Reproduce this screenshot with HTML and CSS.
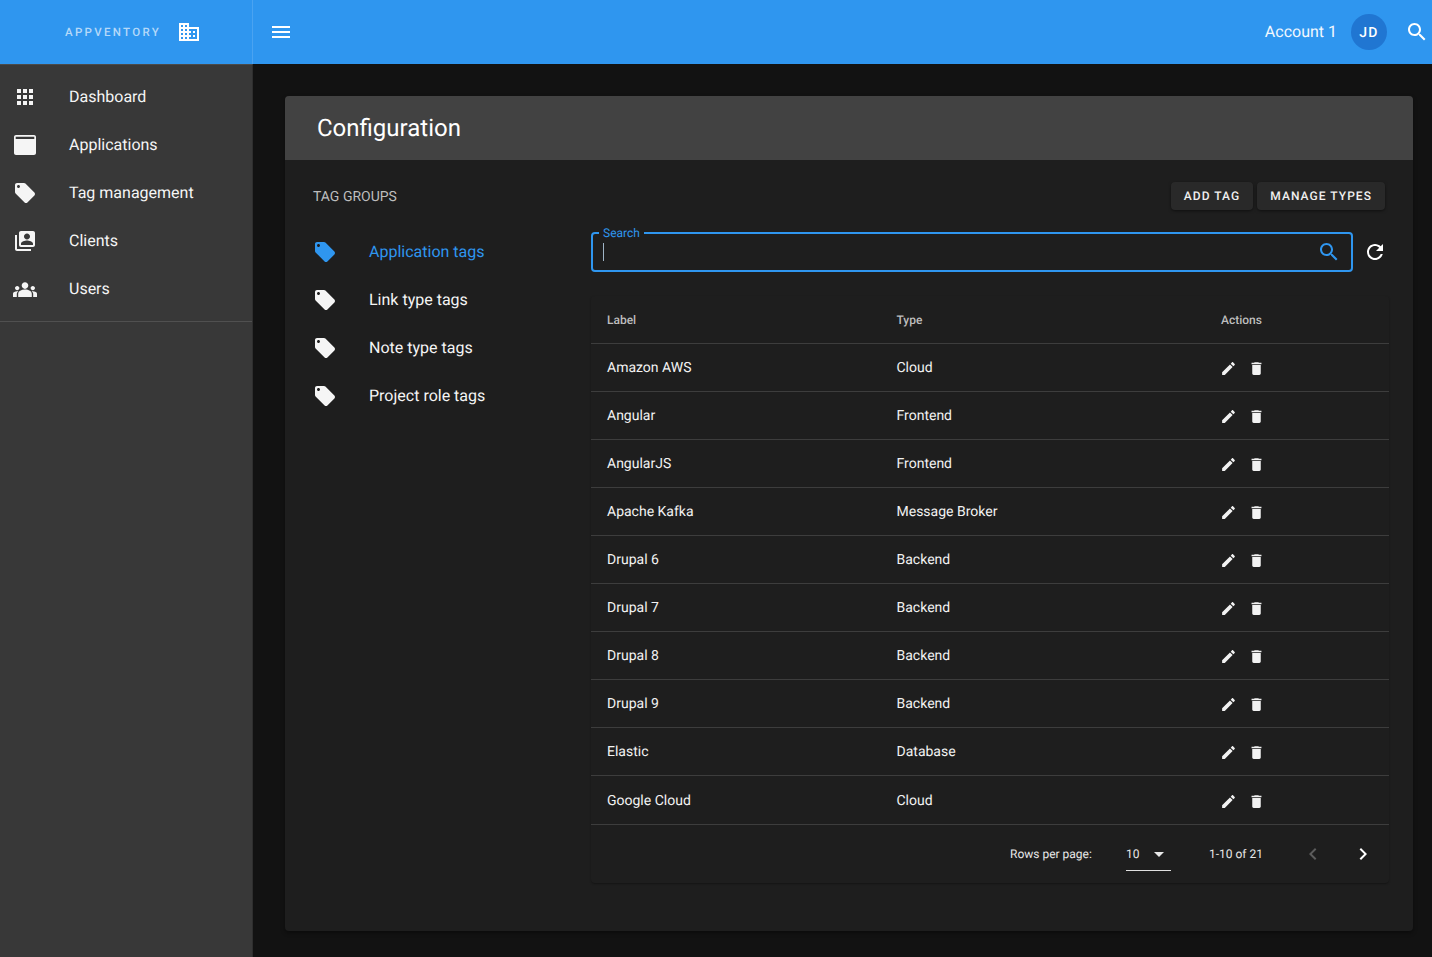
FILE: index.html
```html
<!DOCTYPE html>
<html lang="en">
<head>
<meta charset="utf-8">
<title>Appventory - Configuration</title>
<link rel="stylesheet" href="styles.css">
</head>
<body>
<svg class="defs" width="0" height="0" aria-hidden="true">
  <symbol id="i-tag" viewBox="0 0 24 24"><path d="M21.41 11.58l-9-9C12.05 2.22 11.55 2 11 2H4c-1.1 0-2 .9-2 2v7c0 .55.22 1.05.59 1.42l9 9c.36.36.86.58 1.41.58.55 0 1.05-.22 1.41-.59l7-7c.37-.36.59-.86.59-1.41 0-.55-.23-1.06-.59-1.42zM5.5 7C4.67 7 4 6.33 4 5.5S4.67 4 5.5 4 7 4.67 7 5.5 6.33 7 5.5 7z"/></symbol>
  <symbol id="i-search" viewBox="0 0 24 24"><path d="M15.5 14h-.79l-.28-.27C15.41 12.59 16 11.11 16 9.5 16 5.91 13.09 3 9.5 3S3 5.91 3 9.5 5.91 16 9.5 16c1.61 0 3.09-.59 4.23-1.57l.27.28v.79l5 4.99L20.49 19l-4.99-5zm-6 0C7.01 14 5 11.99 5 9.5S7.01 5 9.5 5 14 7.01 14 9.5 11.99 14 9.5 14z"/></symbol>
  <symbol id="i-edit" viewBox="0 0 24 24"><path d="M3 17.25V21h3.75L17.81 9.94l-3.75-3.75L3 17.25zM20.71 7.04c.39-.39.39-1.02 0-1.41l-2.34-2.34c-.39-.39-1.02-.39-1.41 0l-1.83 1.83 3.75 3.75 1.83-1.83z"/></symbol>
  <symbol id="i-delete" viewBox="0 0 24 24"><path d="M6 19c0 1.1.9 2 2 2h8c1.1 0 2-.9 2-2V7H6v12zM19 4h-3.5l-1-1h-5l-1 1H5v2h14V4z"/></symbol>
</svg>

<header class="topbar">
  <div class="brand">
    <span class="brand-name">APPVENTORY</span>
    <svg class="icon" viewBox="0 0 24 24"><path d="M12 7V3H2v18h20V7H12zM6 19H4v-2h2v2zm0-4H4v-2h2v2zm0-4H4V9h2v2zm0-4H4V5h2v2zm4 12H8v-2h2v2zm0-4H8v-2h2v2zm0-4H8V9h2v2zm0-4H8V5h2v2zm10 12h-8v-2h2v-2h-2v-2h2v-2h-2V9h8v10zm-2-8h-2v2h2v-2zm0 4h-2v2h2v-2z"/></svg>
  </div>
  <div class="topbar-main">
    <svg class="icon" viewBox="0 0 24 24"><path d="M3 18h18v-2H3v2zm0-5h18v-2H3v2zm0-7v2h18V6H3z"/></svg>
    <div class="account">
      <span class="account-name">Account 1</span>
      <span class="avatar">JD</span>
      <svg class="icon"><use href="#i-search"/></svg>
    </div>
  </div>
</header>

<div class="shell">
  <aside class="sidebar">
    <nav class="nav">
      <a class="nav-item"><svg class="icon" viewBox="0 0 24 24"><path d="M4 8h4V4H4v4zm6 12h4v-4h-4v4zm-6 0h4v-4H4v4zm0-6h4v-4H4v4zm6 0h4v-4h-4v4zm6-10v4h4V4h-4zm-6 4h4V4h-4v4zm6 6h4v-4h-4v4zm0 6h4v-4h-4v4z"/></svg><span>Dashboard</span></a>
      <a class="nav-item"><svg class="icon" viewBox="0 0 24 24"><path fill-rule="evenodd" d="M3 2h18c1.1 0 2 .9 2 2v16c0 1.1-.9 2-2 2H3c-1.1 0-2-.9-2-2V4c0-1.100.9-2 2-2zM2.700 3.700v2.400h18.600V3.700H2.700z"/></svg><span>Applications</span></a>
      <a class="nav-item"><svg class="icon"><use href="#i-tag"/></svg><span>Tag management</span></a>
      <a class="nav-item"><svg class="icon" viewBox="0 0 24 24"><path d="M4 6H2v14c0 1.100.9 2 2 2h14v-2H4V6z"/><path d="M20 2H8c-1.100 0-2 .9-2 2v12c0 1.100.9 2 2 2h12c1.100 0 2-.9 2-2V4c0-1.100-.9-2-2-2zm-6 2.500c1.660 0 3 1.340 3 3s-1.340 3-3 3-3-1.340-3-3 1.340-3 3-3zM20 16H8v-1.500c0-2 4-3.100 6-3.100s6 1.100 6 3.100V16z"/></svg><span>Clients</span></a>
      <a class="nav-item"><svg class="icon" viewBox="0 0 24 24"><path d="M12 12.600c1.900 0 3.500.45 4.800 1.050 1.250.6 2 1.800 2 3.100V20H5.200v-3.250c0-1.300.75-2.500 2-3.100 1.300-.6 2.900-1.050 4.800-1.050zM4.200 13.300c1.250 0 2.200-1 2.200-2.200s-.95-2.200-2.200-2.200-2.200 1-2.200 2.200 .95 2.200 2.200 2.200zm1.100 1.150c-.37-.05-.72-.08-1.100-.08-1.050 0-2.050.22-2.950.62C.48 15.350 0 16.100 0 16.950V20h3.800v-3.250c0-.85.55-1.700 1.500-2.300zM19.800 13.300c1.250 0 2.200-1 2.200-2.200s-.95-2.200-2.200-2.200-2.200 1-2.200 2.200 .95 2.200 2.200 2.200zM24 16.950c0-.85-.48-1.600-1.250-1.960-.9-.4-1.900-.62-2.950-.62-.38 0-.73.03-1.100.08.95.6 1.500 1.450 1.500 2.300V20H24v-3.050zM12 5.300c1.830 0 3.300 1.470 3.300 3.300s-1.470 3.300-3.300 3.300-3.300-1.470-3.300-3.300 1.470-3.300 3.300-3.300z"/></svg><span>Users</span></a>
    </nav>
  </aside>

  <main class="content">
    <section class="card">
      <h1 class="card-title">Configuration</h1>
      <div class="card-body">
        <div class="toolbar">
          <h2 class="group-title">TAG GROUPS</h2>
          <div class="buttons">
            <button class="btn">ADD TAG</button>
            <button class="btn">MANAGE TYPES</button>
          </div>
        </div>
        <div class="columns">
          <ul class="groups">
            <li class="group group-active"><svg class="icon"><use href="#i-tag"/></svg><span>Application tags</span></li>
            <li class="group"><svg class="icon"><use href="#i-tag"/></svg><span>Link type tags</span></li>
            <li class="group"><svg class="icon"><use href="#i-tag"/></svg><span>Note type tags</span></li>
            <li class="group"><svg class="icon"><use href="#i-tag"/></svg><span>Project role tags</span></li>
          </ul>
          <div class="panel">
            <div class="search-row">
              <div class="search-field">
                <span class="search-label">Search</span>
                <span class="caret"></span>
                <svg class="icon search-icon"><use href="#i-search"/></svg>
              </div>
              <svg class="icon" viewBox="0 0 24 24"><path d="M17.650 6.350C16.200 4.900 14.210 4 12 4c-4.420 0-7.990 3.580-7.990 8s3.570 8 7.990 8c3.730 0 6.840-2.550 7.730-6h-2.080c-.82 2.330-3.040 4-5.650 4-3.310 0-6-2.690-6-6s2.690-6 6-6c1.660 0 3.140.69 4.220 1.780L13 11h7V4l-2.350 2.350z"/></svg>
            </div>
            <div class="table-wrap">
              <div class="row row-head"><div>Label</div><div>Type</div><div>Actions</div></div>
              <div class="row"><div>Amazon AWS</div><div>Cloud</div><div class="actions"><svg class="icon-sm"><use href="#i-edit"/></svg><svg class="icon-sm"><use href="#i-delete"/></svg></div></div>
              <div class="row"><div>Angular</div><div>Frontend</div><div class="actions"><svg class="icon-sm"><use href="#i-edit"/></svg><svg class="icon-sm"><use href="#i-delete"/></svg></div></div>
              <div class="row"><div>AngularJS</div><div>Frontend</div><div class="actions"><svg class="icon-sm"><use href="#i-edit"/></svg><svg class="icon-sm"><use href="#i-delete"/></svg></div></div>
              <div class="row"><div>Apache Kafka</div><div>Message Broker</div><div class="actions"><svg class="icon-sm"><use href="#i-edit"/></svg><svg class="icon-sm"><use href="#i-delete"/></svg></div></div>
              <div class="row"><div>Drupal 6</div><div>Backend</div><div class="actions"><svg class="icon-sm"><use href="#i-edit"/></svg><svg class="icon-sm"><use href="#i-delete"/></svg></div></div>
              <div class="row"><div>Drupal 7</div><div>Backend</div><div class="actions"><svg class="icon-sm"><use href="#i-edit"/></svg><svg class="icon-sm"><use href="#i-delete"/></svg></div></div>
              <div class="row"><div>Drupal 8</div><div>Backend</div><div class="actions"><svg class="icon-sm"><use href="#i-edit"/></svg><svg class="icon-sm"><use href="#i-delete"/></svg></div></div>
              <div class="row"><div>Drupal 9</div><div>Backend</div><div class="actions"><svg class="icon-sm"><use href="#i-edit"/></svg><svg class="icon-sm"><use href="#i-delete"/></svg></div></div>
              <div class="row"><div>Elastic</div><div>Database</div><div class="actions"><svg class="icon-sm"><use href="#i-edit"/></svg><svg class="icon-sm"><use href="#i-delete"/></svg></div></div>
              <div class="row row-last"><div>Google Cloud</div><div>Cloud</div><div class="actions"><svg class="icon-sm"><use href="#i-edit"/></svg><svg class="icon-sm"><use href="#i-delete"/></svg></div></div>
              <div class="pager">
                <span class="pager-label">Rows per page:</span>
                <span class="pager-select"><span>10</span><svg class="icon" viewBox="0 0 24 24"><path d="M7 10l5 5 5-5z"/></svg></span>
                <span class="pager-range">1-10 of 21</span>
                <svg class="icon pager-prev" viewBox="0 0 24 24"><path d="M15.410 7.410L14 6l-6 6 6 6 1.410-1.410L10.830 12z"/></svg>
                <svg class="icon pager-next" viewBox="0 0 24 24"><path d="M10 6L8.590 7.410 13.170 12l-4.580 4.590L10 18l6-6z"/></svg>
              </div>
            </div>
          </div>
        </div>
      </div>
    </section>
  </main>
</div>
</body>
</html>
```
FILE: styles.css
```css
* { box-sizing: border-box; }
html, body { height: 100%; }
body {
  margin: 0;
  background: #121212;
  color: #fff;
  font-family: Roboto, "Liberation Sans", sans-serif;
  font-size: 14px;
  text-rendering: geometricPrecision;
  overflow: hidden;
  display: flex;
  flex-direction: column;
}
.defs { position: absolute; }
.icon { width: 24px; height: 24px; fill: currentColor; flex: none; display: block; }
.icon-sm { width: 17px; height: 17px; fill: currentColor; flex: none; display: block; }

/* top bar */
.topbar { display: flex; height: 64px; flex: none; background: #2f96ef; }
.brand {
  width: 253px;
  flex: none;
  display: flex;
  align-items: center;
  padding-left: 65px;
  gap: 16px;
  border-right: 1px solid #4aa3f1;
}
.brand-name { font-size: 11.5px; font-weight: 500; letter-spacing: 2.3px; color: #b5d9f9; }
.topbar-main { flex: 1; display: flex; align-items: center; justify-content: space-between; padding: 0 3px 0 16px; }
.account { display: flex; align-items: center; }
.account-name { font-size: 16px; margin: 0 14px 2px 0; color: #f2f8fe; }
.avatar {
  width: 36px;
  height: 36px;
  padding-top: 1px;
  border-radius: 50%;
  background: #2076d2;
  display: flex;
  align-items: center;
  justify-content: center;
  font-size: 14px;
  font-weight: 500;
  letter-spacing: 1.2px;
  margin-right: 18px;
}

/* sidebar */
.shell { flex: 1; display: flex; min-height: 0; }
.sidebar { width: 253px; flex: none; background: #383838; border-right: 1px solid #2e2e2e; border-top: 1px solid #4a4a4a; }
.nav { padding: 7px 0 9px; border-bottom: 1px solid #505050; }
.nav-item { display: flex; align-items: center; height: 48px; padding-left: 13px; font-size: 16px; color: #f5f5f5; }
.nav-item .icon { margin-top: 2px; }
.nav-item span { margin-left: 32px; }

/* main */
.content { flex: 1; padding: 32px 19px 0 32px; min-width: 0; }
.card { background: #1e1e1e; border-radius: 4px; overflow: hidden; box-shadow: 0 2px 4px rgba(0,0,0,.4); }
.card-title { margin: 0; height: 64px; display: flex; align-items: center; padding-left: 32px; background: #424242; font-size: 24px; font-weight: 400; color: #fff; }
.card-body { padding: 22px 28px 48px; }
.toolbar { display: flex; align-items: center; justify-content: space-between; height: 28px; }
.group-title { margin: 0; padding-top: 2px; font-size: 14px; font-weight: 400; color: #bdbdbd; }
.buttons { display: flex; gap: 4px; }
.btn {
  height: 28px;
  padding: 0 13px 1px;
  border: 0;
  border-radius: 4px;
  background: #292929;
  color: #f0f0f0;
  font: 500 12px Roboto, sans-serif;
  text-rendering: geometricPrecision;
  letter-spacing: 1.05px;
  box-shadow: 0 1px 3px rgba(0,0,0,.5);
}
.columns { display: flex; margin-top: 18px; margin-right: -4px; }
.groups { list-style: none; margin: 0; padding: 0; width: 278px; flex: none; }
.group { display: flex; align-items: center; height: 48px; font-size: 16px; color: #f5f5f5; }
.group span { margin: 0 0 2px 32px; }
.group-active { color: #2f96ef; }
.panel { flex: 1; min-width: 0; padding-top: 4px; }
.search-row { display: flex; align-items: center; height: 40px; gap: 10px; }
.search-field { position: relative; width: 762px; height: 40px; border: 2px solid #2f96ef; border-radius: 4px; display: flex; align-items: center; justify-content: space-between; padding: 0 10px; }
.search-label { position: absolute; left: 6px; top: -8px; padding: 0 4px; background: #1e1e1e; color: #2f96ef; font-size: 12px; line-height: 14px; }
.caret { width: 1px; height: 18px; background: #9fb4c6; }
.search-icon { color: #2f96ef; }
.table-wrap { margin-top: 24px; border-radius: 4px; box-shadow: 0 1px 2px rgba(0,0,0,.35); }
.row { display: grid; grid-template-columns: 289.5px 324.5px 184px; align-items: center; height: 48px; padding-left: 16px; border-bottom: 1px solid #3d3d3d; font-size: 14px; color: #f2f2f2; }
.row-head { font-size: 12px; font-weight: 500; color: #bdbdbd; }
.row-last { height: 49px; padding-top: 2px; }
.actions { display: flex; gap: 11px; margin-left: -1px; padding-top: 2px; }
.row-last .actions { padding-top: 0; }
.pager { display: flex; align-items: center; height: 58px; font-size: 12px; color: #e8e8e8; padding-left: 419px; }
.pager-label { width: 116px; }
.pager-select { width: 45px; height: 34px; display: flex; align-items: center; justify-content: space-between; border-bottom: 1px solid #e0e0e0; padding-top: 1px; }
.pager-range { margin-left: 38px; width: 92px; }
.pager-prev { color: #5c5c5c; }
.pager-next { margin-left: 26px; color: #fff; }
```
